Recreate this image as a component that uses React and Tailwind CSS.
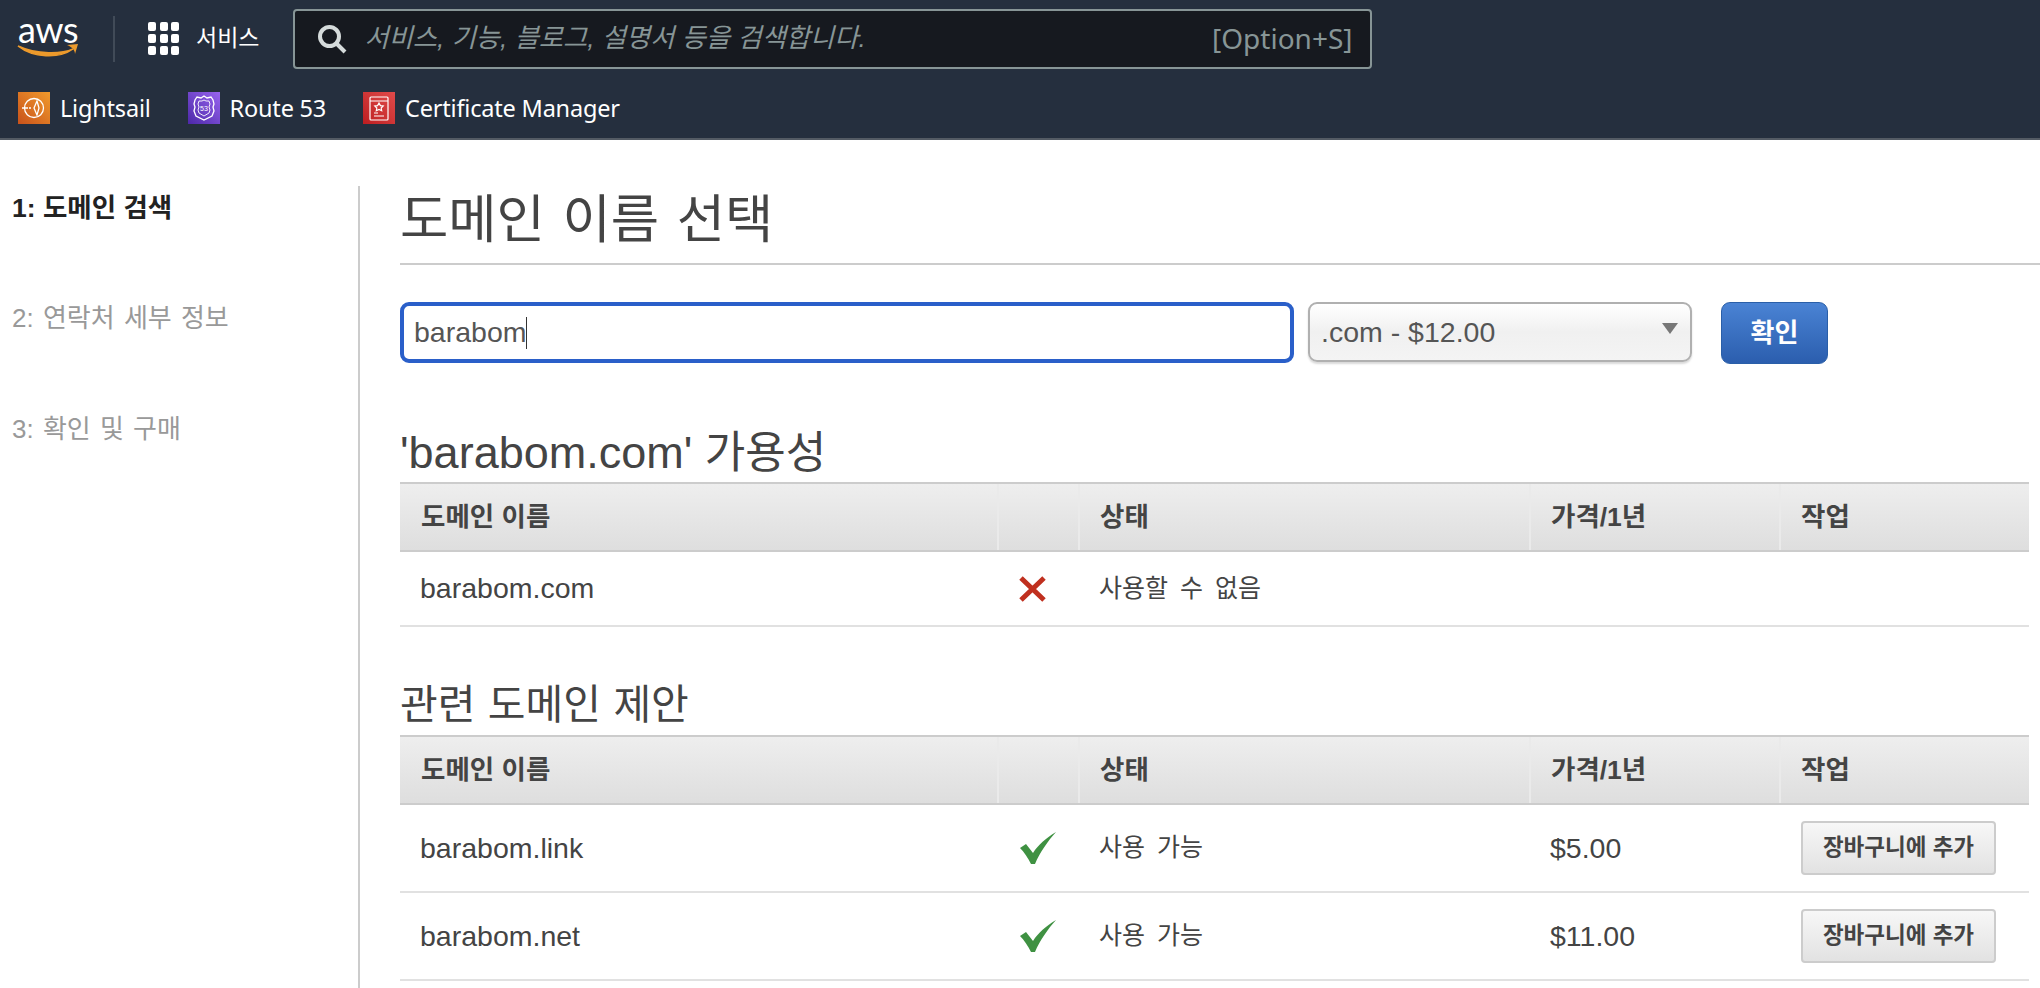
const sans = "font-['Liberation_Sans','Noto_Sans_CJK_KR',sans-serif]";

function Check() {
  return (
    <svg width="38" height="32" viewBox="0 0 38 32" className="block">
      <path d="M1 16 L7 12 L14 21 C19 13 27 6 37 0 C29 9 21 20 16 32 L12 32 C9 26 5 20 1 16 Z" fill="#3f9142" />
    </svg>
  );
}

function Cross() {
  return (
    <svg width="27" height="26" viewBox="0 0 27 26" className="block">
      <path d="M2 2 L25 24 M25 2 L2 24" stroke="#c0301f" strokeWidth="5" fill="none" />
    </svg>
  );
}

function TileIcon({ kind }) {
  if (kind === "sail")
    return (
      <svg viewBox="0 0 32 32" width="32" height="32" fill="none" stroke="#fff" strokeWidth="1.3">
        <circle cx="16" cy="16" r="9.5" />
        <path d="M4 16h6M11 16h2M19 9l-3 7 3 7 2-7z" />
      </svg>
    );
  if (kind === "route")
    return (
      <svg viewBox="0 0 32 32" width="32" height="32" fill="none" stroke="#fff" strokeWidth="1.3">
        <path d="M16 4l3 2 4-1 2 3 1 4-1 3 1 4-2 5-8 4-8-4-2-5 1-4-1-3 1-4 2-3 4 1z" />
        <path d="M16 8l2 1 3 0 1 3-1 3 1 3-1 3-5 3-5-3-1-3 1-3-1-3 1-3 3 0z" strokeWidth="0.9" />
        <text x="16" y="19" textAnchor="middle" fontSize="7" fill="#fff" stroke="none" fontFamily="Liberation Sans">53</text>
      </svg>
    );
  return (
    <svg viewBox="0 0 32 32" width="32" height="32" fill="none" stroke="#fff" strokeWidth="1.2">
      <rect x="7" y="5" width="18" height="23" rx="1" />
      <path d="M7 9h18M11 24h10M11 21h4" />
      <path d="M16 11l1.4 2.6 2.8.4-2 2 .5 2.8-2.7-1.3-2.7 1.3.5-2.8-2-2 2.800-.4z" />
    </svg>
  );
}

function Shortcut({ kind, label, tile }) {
  return (
    <div className="flex items-center gap-[10px]">
      <div className={`w-[32px] h-[32px] ${tile}`}>
        <TileIcon kind={kind} />
      </div>
      <span className="font-['Noto_Sans',sans-serif] text-[23.5px] leading-[32px] text-white tracking-[-0.2px]">{label}</span>
    </div>
  );
}

function Header() {
  return (
    <header className="bg-[#252f3e] h-[140px] border-b-2 border-[#545b64] flex flex-col">
      <div className="flex items-center h-[76px] pt-[1px]">
        <div className="ml-[16px] w-[64px] h-[46px] flex flex-col items-center">
          <span className="font-['Lato',sans-serif] text-[36px] leading-[30px] text-white tracking-[-0.5px] -mt-[2px]">aws</span>
          <svg width="62" height="16" viewBox="0 0 62 16" className="-mt-[1px]">
            <path d="M1 3 C16 15 42 16 56 6 C45 11 20 12 1 3 Z" fill="#ec9a2c" stroke="#ec9a2c" strokeWidth="1.5" />
            <path d="M50 2 L61 1 L58 11 C58 7 55 4 50 2 Z" fill="#ec9a2c" />
          </svg>
        </div>
        <div className="w-[2px] h-[46px] bg-[#414b58] ml-[33px]" />
        <div className="ml-[33px] grid grid-cols-3 gap-[3px] w-[32px]">
          {[0, 1, 2, 3, 4, 5, 6, 7, 8].map((i) => (
            <div key={i} className="w-[8px] h-[9px] rounded-[2px] bg-white" />
          ))}
        </div>
        <span className={`ml-[16px] ${sans} text-[23px] text-white`}>서비스</span>
        <div className="ml-[34px] w-[1079px] h-[60px] bg-[#16191f] border-2 border-[#879596] rounded-[4px] flex items-center pl-[22px] pr-[18px]">
          <svg width="30" height="30" viewBox="0 0 30 30" fill="none" stroke="#d5dbdb" strokeWidth="4">
            <circle cx="12.500" cy="12.500" r="9.500" />
            <path d="M19.500 19.500 L28 28" />
          </svg>
          <span className={`ml-[17px] ${sans} italic text-[26.3px] text-[#879596]`}>
            서비스, 기능, 블로그, 설명서 등을 검색합니다.
          </span>
          <span className="ml-auto -mt-[2px] font-['Noto_Sans',sans-serif] text-[28px] text-[#879596]">[Option+S]</span>
        </div>
      </div>
      <div className="flex items-center h-[38px] mt-[13px] pl-[18px] gap-[37px]">
        <Shortcut kind="sail" label="Lightsail" tile="bg-gradient-to-tr from-[#c8511b] to-[#f09a2c]" />
        <Shortcut kind="route" label="Route 53" tile="bg-gradient-to-tr from-[#4d27a8] to-[#9a64f0]" />
        <Shortcut kind="cert" label="Certificate Manager" tile="bg-gradient-to-tr from-[#bd1c20] to-[#e04a4a]" />
      </div>
    </header>
  );
}

function TableHead() {
  const cols = [
    ["도메인 이름", "pl-[21px]"],
    ["", ""],
    ["상태", "pl-[20px]"],
    ["가격/1년", "pl-[20px]"],
    ["작업", "pl-[20px]"],
  ];
  return (
    <div className="grid grid-cols-[599px_81px_451px_250px_248px] h-[70px] border-y-2 border-[#cccccc] bg-gradient-to-b from-[#eeeeee] to-[#dedede]">
      {cols.map(([t, p], i) => (
        <div key={i} className={`flex items-center pt-[2px] ${p} ${i < 4 ? "border-r-2 border-[#eaeaea]" : ""} font-bold text-[26.5px] text-[#444444]`}>
          {t}
        </div>
      ))}
    </div>
  );
}

function Row({ name, ok, price, status, h }) {
  return (
    <div className={`grid grid-cols-[599px_81px_451px_250px_248px] ${h} border-b-2 border-[#e1e1e1] items-center text-[#444444]`}>
      <div className="pl-[20px] text-[28.5px]">{name}</div>
      <div className="pl-[20px] flex items-center">{ok ? <Check /> : <Cross />}</div>
      <div className="pl-[19px] text-[25px] [word-spacing:5px]">{status}</div>
      <div className="pl-[19px] text-[28.5px]">{price}</div>
      <div className="pl-[20px]">
        {ok && (
          <div className="w-[195px] h-[54px] rounded-[4px] border-2 border-[#cccccc] bg-gradient-to-b from-[#f7f7f7] to-[#e2e2e2] flex items-center justify-center font-bold text-[22.5px] text-[#444444]">
            장바구니에 추가
          </div>
        )}
      </div>
    </div>
  );
}

export default function App() {
  return (
    <div className={`w-[2040px] h-[988px] overflow-hidden bg-white ${sans}`}>
      <Header />
      <div className="flex h-[848px]">
        <aside className="w-[358px] shrink-0 pl-[12px] pt-[50px] flex flex-col gap-[74px]">
          <div className="text-[26.5px] leading-[37px] font-bold text-[#222222]">1: 도메인 검색</div>
          <div className="text-[26px] leading-[37px] text-[#999999] [word-spacing:2px] -mt-[1px]">2: 연락처 세부 정보</div>
          <div className="text-[26px] leading-[37px] text-[#999999] [word-spacing:2px]">3: 확인 및 구매</div>
        </aside>
        <main className="flex-1 mt-[46px] border-l-2 border-[#cccccc] pl-[40px]">
          <h1 className="h-[79px] text-[52.5px] leading-[68px] text-[#444444] [word-spacing:3px] border-b-2 border-[#cccccc]">
            도메인 이름 선택
          </h1>
          <div className="flex mt-[37px]">
            <div className="w-[894px] h-[61px] rounded-[9px] border-[4px] border-[#2a5fc9] flex items-center pl-[10px] text-[28.5px] text-[#555555]">
              barabom<span className="w-[1px] h-[32px] bg-[#333333]" />
            </div>
            <div className="relative ml-[14px] w-[384px] h-[60px] rounded-[9px] border-2 border-[#b0b0b0] bg-gradient-to-b from-[#ffffff] via-[#f0f0f0] to-[#f4f4f4] shadow-[0_2px_2px_rgba(0,0,0,0.15)] flex items-center pl-[11px] text-[28.5px] text-[#555555]">
              .com - $12.00
              <div className="absolute right-[12px] top-[19px] w-0 h-0 border-x-[8px] border-x-transparent border-t-[11px] border-t-[#777777]" />
            </div>
            <div className="ml-[29px] w-[107px] h-[62px] rounded-[9px] border border-[#2a5fa8] bg-gradient-to-b from-[#4a83d4] to-[#2b5eae] flex items-center justify-center font-bold text-[26px] text-white">
              확인
            </div>
          </div>
          <h2 className="mt-[55px] h-[63px] leading-[68px] text-[45px] text-[#444444] whitespace-nowrap">
            'barabom.com' <span className="text-[44px]">가용성</span>
          </h2>
          <div className="w-[1629px]">
            <TableHead />
            <Row name="barabom.com" status="사용할 수 없음" price="" ok={false} h="h-[75px]" />
          </div>
          <h2 className="mt-[51px] h-[57px] leading-[54px] text-[41px] text-[#444444] [word-spacing:1px]">관련 도메인 제안</h2>
          <div className="w-[1629px]">
            <TableHead />
            <Row name="barabom.link" status="사용 가능" price="$5.00" ok h="h-[88px]" />
            <Row name="barabom.net" status="사용 가능" price="$11.00" ok h="h-[88px]" />
          </div>
        </main>
      </div>
    </div>
  );
}
